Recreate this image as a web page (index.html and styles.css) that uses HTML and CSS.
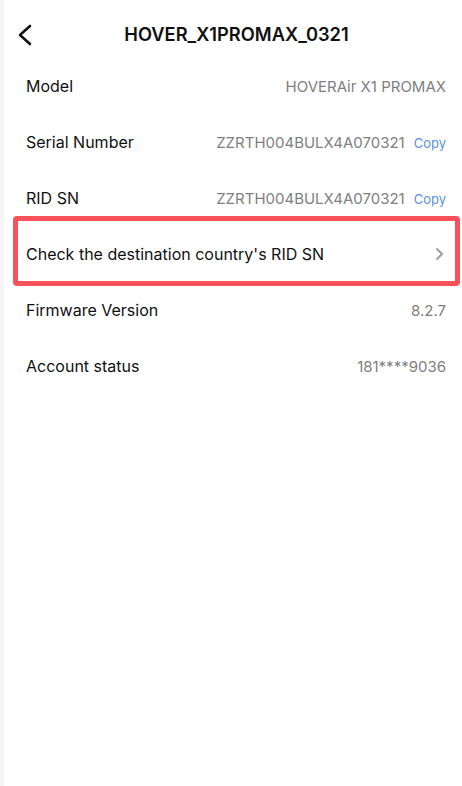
FILE: index.html
```html
<!DOCTYPE html>
<html lang="en">
<head>
    <meta charset="UTF-8">
    <meta name="viewport" content="width=device-width, initial-scale=1.0">
    <title>Device Info</title>
    <link rel="stylesheet" href="styles.css">
</head>
<body>
<div class="page">
    <div class="header">
        <span class="back">
            <svg width="16" height="22" viewBox="0 0 16 22"><path d="M13 2 L3 11 L13 20" fill="none" stroke="#111" stroke-width="2.6" stroke-linecap="round" stroke-linejoin="round"/></svg>
        </span>
        <h1>HOVER_X1PROMAX_0321</h1>
    </div>

    <div class="list">
        <div class="row">
            <span class="label">Model</span>
            <span class="value">HOVERAir X1 PROMAX</span>
        </div>
        <div class="row">
            <span class="label">Serial Number</span>
            <span class="value">ZZRTH004BULX4A070321<span class="copy">Copy</span></span>
        </div>
        <div class="row">
            <span class="label">RID SN</span>
            <span class="value">ZZRTH004BULX4A070321<span class="copy">Copy</span></span>
        </div>
        <div class="row marked">
            <span class="label">Check the destination country's RID SN</span>
            <svg class="chevron" width="9" height="14" viewBox="0 0 9 14"><path d="M2 2 L7 7 L2 12" fill="none" stroke="#9a9a9a" stroke-width="1.8" stroke-linecap="round" stroke-linejoin="round"/></svg>
        </div>
        <div class="row">
            <span class="label">Firmware Version</span>
            <span class="value">8.2.7</span>
        </div>
        <div class="row">
            <span class="label">Account status</span>
            <span class="value">181****9036</span>
        </div>
    </div>
</div>
</body>
</html>
```

FILE: styles.css
```css
html, body {
    margin: 0;
    height: 100%;
}
body {
    font-family: Inter, 'Liberation Sans', Arial, sans-serif;
    background-color: #f6f6f6;
    color: #111;
}
.page {
    margin-left: 4px;
    min-height: 100%;
    background: white;
}
.header {
    position: relative;
    height: 58px;
    display: flex;
    align-items: center;
    justify-content: center;
}
.back {
    position: absolute;
    left: 13px;
    top: 24px;
}
.back svg {
    display: block;
}
h1 {
    margin: 0;
    font-size: 18.3px;
    font-weight: 600;
    padding-left: 7px;
    padding-top: 10px;
}
.list {
    padding: 0 16px 0 22px;
}
.row {
    height: 56px;
    display: flex;
    align-items: center;
    justify-content: space-between;
    position: relative;
}
.label {
    font-size: 16px;
}
.value {
    font-size: 15px;
    color: #808080;
}
.copy {
    font-size: 13px;
    color: #5b8fe0;
    margin-left: 9px;
}
.chevron {
    margin-right: 2px;
}
/* red highlight frame drawn over the row */
.marked::after {
    content: "";
    position: absolute;
    top: -10px;
    bottom: -4px;
    left: -13px;
    right: -14px;
    border: 5px solid #f9525a;
    border-radius: 4px;
}
```
